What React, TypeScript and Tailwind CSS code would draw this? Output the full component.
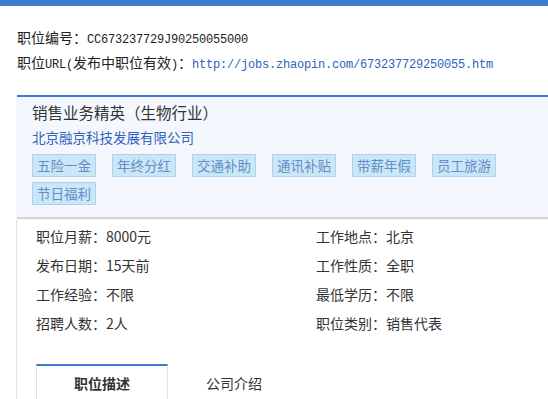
/**
 * JobHeader — job posting summary: id line, card with title/company/perks,
 * basic facts grid and the description tabs.
 */

const perks = ['五险一金', '年终分红', '交通补助', '通讯补贴', '带薪年假', '员工旅游', '节日福利'];

const facts: [string, string][] = [
  ['职位月薪：', '8000元'],
  ['工作地点：', '北京'],
  ['发布日期：', '15天前'],
  ['工作性质：', '全职'],
  ['工作经验：', '不限'],
  ['最低学历：', '不限'],
  ['招聘人数：', '2人'],
  ['职位类别：', '销售代表'],
];

const cjk = { fontFamily: '"Noto Sans CJK SC", "Noto Sans", sans-serif' };

function Mono({ children, className = '' }: { children: React.ReactNode; className?: string }) {
  return (
    <span
      className={`font-['Liberation_Mono',monospace] text-[12px] tracking-[-0.2px] leading-none ${className}`}
    >
      {children}
    </span>
  );
}

export default function App() {
  return (
    <div className="w-[548px] h-[399px] overflow-hidden bg-white text-[#222]" style={cjk}>
      {/* top strip */}
      <div className="h-[6px] bg-[#3d7bd1]" />

      {/* id + url */}
      <div className="pl-[17px] pt-[19px] text-[14px] whitespace-nowrap">
        <div className="h-[25px] leading-[25px]">
          职位编号：<Mono>CC673237729J90250055000</Mono>
        </div>
        <div className="h-[25px] leading-[25px]">
          职位<Mono>URL(</Mono>发布中职位有效<Mono>)</Mono>：
          <Mono className="text-[#2f62b8]">http://jobs.zhaopin.com/673237729250055.htm</Mono>
        </div>
      </div>

      {/* title card */}
      <div className="mt-[20px] ml-[17px] w-[560px] border-t-2 border-[#3d7bd1] bg-[#f4f8fe] pl-[15px] pt-[2px] pb-[12px] shadow-[0_2px_1px_#d6d6d6]">
        <div className="text-[15.5px] leading-[26px] text-[#333]">销售业务精英（生物行业）</div>
        <div className="text-[13.5px] leading-[24px] text-[#2f62b8]">北京融京科技发展有限公司</div>
        <div className="mt-[5px] flex w-[520px] flex-wrap gap-x-[16px] gap-y-[5px]">
          {perks.map((p) => (
            <span
              key={p}
              className="flex h-[23px] w-[64px] items-center justify-center border border-[#a9d3ee] bg-[#cbe6f6] text-[13.5px] text-[#5f8fc6]"
            >
              {p}
            </span>
          ))}
        </div>
      </div>

      {/* facts + tabs */}
      <div className="mt-[3px] ml-[16px] border-l border-[#d6e4f5] pt-[2px] pl-[19px]">
        <div className="grid w-[420px] grid-cols-[280px_1fr] text-[14px] leading-[29px] text-[#333]">
          {facts.map(([k, v]) => (
            <div key={k} className="whitespace-nowrap">
              {k}
              {v}
            </div>
          ))}
        </div>

        <div className="mt-[26px] flex text-[14px] text-[#333]">
          <div className="flex h-[40px] w-[132px] items-center justify-center border-x border-t-2 border-x-[#d6e4f5] border-t-[#3d7bd1] pb-[4px] font-bold">
            职位描述
          </div>
          <div className="flex h-[40px] w-[132px] items-center justify-center pb-[2px]">公司介绍</div>
        </div>
      </div>
    </div>
  );
}
